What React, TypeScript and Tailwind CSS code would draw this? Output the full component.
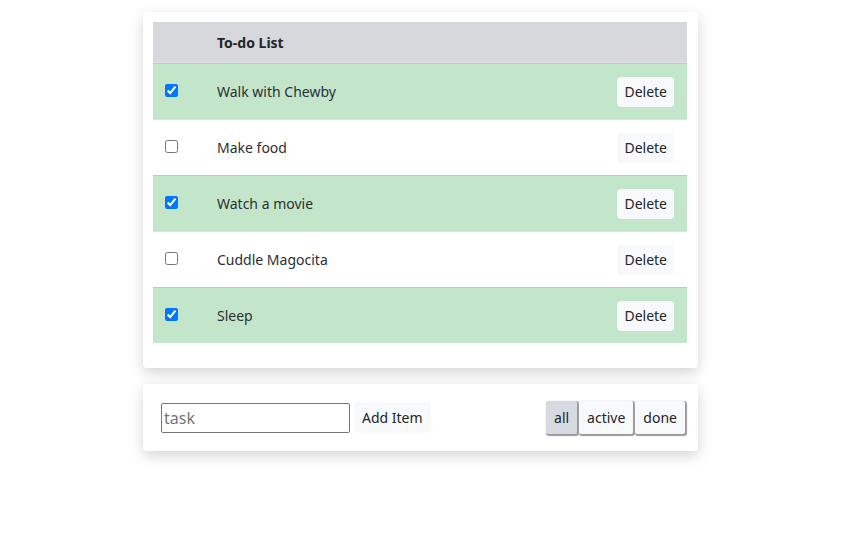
import { useState } from 'react'

interface Todo {
  id: number
  text: string
  done: boolean
}

const initial: Todo[] = [
  { id: 1, text: 'Walk with Chewby', done: true },
  { id: 2, text: 'Make food', done: false },
  { id: 3, text: 'Watch a movie', done: true },
  { id: 4, text: 'Cuddle Magocita', done: false },
  { id: 5, text: 'Sleep', done: true },
]

export default function App() {
  const [todos, setTodos] = useState<Todo[]>(initial)
  const [filter, setFilter] = useState<'all' | 'active' | 'done'>('all')

  const toggle = (id: number) =>
    setTodos(todos.map((t) => (t.id === id ? { ...t, done: !t.done } : t)))

  return (
    <div
      className="min-h-[557px] bg-white pt-3 text-[14px] text-[#212529]"
      style={{ fontFamily: '"Noto Sans", "Open Sans", sans-serif' }}
    >
      {/* List card */}
      <div className="mx-auto w-[555px] rounded bg-white pb-[25px] pl-[10px] pr-[11px] pt-[10px] shadow-[0_5px_14px_rgba(0,0,0,0.17)]">
        <div className="flex h-[41px] items-center border-b border-[#dee2e6] bg-[#d6d8db] font-bold">
          <div className="w-[52px]" />
          <div className="px-3">To-do List</div>
        </div>
        {todos.map((todo) => (
          <div
            key={todo.id}
            className={
              todo.done
                ? 'flex h-[56px] items-center border-t border-[#a9d6b4] bg-[#c3e6cb]'
                : 'flex h-[56px] items-center border-t border-[#dee2e6] bg-white'
            }
          >
            <div className="flex w-[52px] pl-3">
              <input
                type="checkbox"
                checked={todo.done}
                onChange={() => toggle(todo.id)}
                className="-mt-[3px] h-[13px] w-[13px] accent-[#0075ff]"
              />
            </div>
            <div className="flex-1 px-3 text-[#2b2f33]">{todo.text}</div>
            <div className="pl-3 pr-[13px]">
              <button className="h-[30px] rounded bg-[#f8f9fa] px-[7px] text-[14px] text-[#212529]">
                Delete
              </button>
            </div>
          </div>
        ))}
      </div>

      {/* Add / filter card */}
      <div className="mx-auto mt-4 flex h-[67px] w-[555px] items-center justify-between rounded bg-white pl-[18px] pr-[13px] shadow-[0_5px_14px_rgba(0,0,0,0.17)]">
        <div className="flex items-center gap-1">
          <input
            placeholder="task"
            className="h-[30px] w-[189px] rounded-[2px] border border-[#767676] px-[2px] text-[16px] placeholder:text-[#757575]"
          />
          <button className="h-[31px] rounded bg-[#f8f9fa] px-[8px] text-[14px] text-[#212529]">
            Add Item
          </button>
        </div>
        <div className="flex gap-[2px]">
          {(['all', 'active', 'done'] as const).map((f) => (
            <button
              key={f}
              onClick={() => setFilter(f)}
              className={
                filter === f
                  ? 'h-[33px] rounded-[2px] bg-[#d6dbe1] px-[8px] text-[14px] shadow-[1px_1px_1px_1px_#9a9a9a]'
                  : 'h-[33px] rounded-[2px] bg-[#f8f9fa] px-[8px] text-[14px] shadow-[1px_1px_1px_1px_#9a9a9a]'
              }
            >
              {f}
            </button>
          ))}
        </div>
      </div>
    </div>
  )
}
